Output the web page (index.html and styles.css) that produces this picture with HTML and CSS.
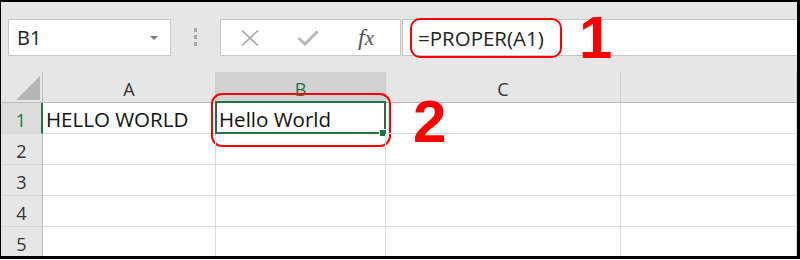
FILE: index.html
```html
<!DOCTYPE html>
<html lang="en">
<head>
    <meta charset="UTF-8">
    <meta name="viewport" content="width=device-width, initial-scale=1.0">
    <title>PROPER</title>
    <link rel="stylesheet" href="styles.css">
</head>

<body>
    <div class="frame">
        <div class="toolbar">
            <div class="name-box">
                <span class="name">B1</span>
                <span class="caret"></span>
            </div>
            <div class="grip"><i></i><i></i><i></i></div>
            <div class="fx-buttons">
                <span class="slot">
                    <svg width="18" height="16" viewBox="0 0 18 16">
                        <path d="M1 0.5 L17 15.5 M17 0.5 L1 15.5" stroke="#a9a9a9" stroke-width="1.6" fill="none"/>
                    </svg>
                </span>
                <span class="slot">
                    <svg width="22" height="16" viewBox="0 0 22 16">
                        <path d="M1.5 8 L8 14 L20.5 1.5" stroke="#b8b8b8" stroke-width="3" fill="none"/>
                    </svg>
                </span>
                <span class="slot"><span class="fx">f<span class="fx-x">x</span></span></span>
            </div>
            <div class="formula">
                <span class="formula-text">=PROPER(A1)</span>
                <span class="mark mark-1">1</span>
            </div>
        </div>

        <div class="sheet">
            <div class="corner"><span class="corner-tri"></span></div>
            <div class="col-head">A</div>
            <div class="col-head on">B</div>
            <div class="col-head">C</div>
            <div class="col-head"></div>

            <div class="row-head on">1</div>
            <div class="cell">HELLO WORLD</div>
            <div class="cell active">Hello World
                <span class="ring"></span>
                <span class="handle"></span>
                <span class="note"></span>
            </div>
            <div class="cell"><span class="mark mark-2">2</span></div>
            <div class="cell"></div>

            <div class="row-head">2</div>
            <div class="cell"></div><div class="cell"></div><div class="cell"></div><div class="cell"></div>

            <div class="row-head">3</div>
            <div class="cell"></div><div class="cell"></div><div class="cell"></div><div class="cell"></div>

            <div class="row-head">4</div>
            <div class="cell"></div><div class="cell"></div><div class="cell"></div><div class="cell"></div>

            <div class="row-head">5</div>
            <div class="cell"></div><div class="cell"></div><div class="cell"></div><div class="cell"></div>
        </div>
    </div>
</body>
</html>
```

FILE: styles.css
```css
body {
    margin: 0;
    background: #fff;
    font-family: "Open Sans", "Noto Sans", sans-serif;
}

.frame {
    width: 800px;
    height: 259px;
    box-sizing: border-box;
    border-style: solid;
    border-color: #000;
    border-width: 2px 3px 3px 1px;
    overflow: hidden;
    background: #fff;
}

/* formula bar */
.toolbar {
    height: 70px;
    box-sizing: border-box;
    padding-top: 17px;
    padding-left: 7px;
    display: flex;
    align-items: flex-start;
    background: #e6e6e6;
}
.name-box {
    width: 163px;
    height: 37px;
    box-sizing: border-box;
    border: 1px solid #c6c6c6;
    background: #fff;
    display: flex;
    align-items: center;
    justify-content: space-between;
    padding: 0 12px 0 8px;
}
.name {
    font-size: 20px;
    color: #222;
}
.caret {
    width: 0;
    height: 0;
    border-left: 4px solid transparent;
    border-right: 4px solid transparent;
    border-top: 4px solid #777;
}
.grip {
    margin-left: 23px;
    margin-top: 9px;
    display: flex;
    flex-direction: column;
    gap: 3px;
}
.grip i {
    width: 3px;
    height: 4px;
    background: #a8a8a8;
}
.fx-buttons {
    margin-left: 23px;
    width: 181px;
    height: 37px;
    box-sizing: border-box;
    border: 1px solid #c6c6c6;
    background: #fff;
    display: flex;
    align-items: center;
}
.slot {
    width: 58px;
    display: flex;
    justify-content: center;
    align-items: center;
}
.fx {
    font-family: "Liberation Serif", serif;
    font-style: italic;
    font-size: 24px;
    line-height: 1;
    color: #555;
    margin-top: -2px;
}
.fx-x {
    font-size: 21px;
}
.formula {
    position: relative;
    flex: 1;
    margin-left: 1px;
    height: 37px;
    box-sizing: border-box;
    border: 1px solid #c6c6c6;
    border-right: none;
    background: #fff;
    display: flex;
    align-items: center;
}
.formula-text {
    margin-left: 7px;
    width: 152px;
    height: 40px;
    box-sizing: border-box;
    border: 2px solid #f00;
    border-radius: 10px;
    padding-left: 6px;
    display: flex;
    align-items: center;
    font-size: 20.5px;
    color: #222;
}

/* red callout numbers */
.mark {
    position: absolute;
    font-family: "Liberation Sans", Arial, sans-serif;
    font-weight: bold;
    font-size: 60px;
    line-height: 1;
    color: #f00;
}
.mark-1 {
    left: 176px;
    top: -12px;
}
.mark-2 {
    left: 27px;
    top: -11px;
}

/* grid */
.sheet {
    height: 184px;
    display: grid;
    grid-template-columns: 42px 173px 170px 235px 1fr;
    grid-template-rows: repeat(6, 31px);
    font-size: 20.5px;
    color: #111;
}
.corner,
.col-head,
.row-head {
    background: #e6e6e6;
    box-sizing: border-box;
    border-right: 1px solid #cdcdcd;
    border-bottom: 1px solid #cdcdcd;
    color: #333;
    font-size: 18px;
    display: flex;
    align-items: center;
    justify-content: center;
}
.corner {
    position: relative;
    border-right-color: #bdbdbd;
    border-bottom-color: #bdbdbd;
}
.corner-tri {
    position: absolute;
    right: 2px;
    bottom: 2px;
    width: 0;
    height: 0;
    border-left: 24px solid transparent;
    border-bottom: 24px solid #b5b5b5;
}
.col-head {
    border-bottom-color: #b8b8b8;
    padding-top: 3px;
}
.col-head.on {
    background: #d2d2d2;
    color: #217346;
}
.row-head {
    border-right-color: #bdbdbd;
    border-bottom-color: #d4d4d4;
    padding-top: 3px;
}
.row-head.on {
    background: #dcdcdc;
    color: #217346;
    border-right: 2px solid #217346;
}
.cell {
    position: relative;
    box-sizing: border-box;
    border-right: 1px solid #dadada;
    border-bottom: 1px solid #dadada;
    padding-left: 3px;
    padding-top: 2px;
    display: flex;
    align-items: center;
    white-space: nowrap;
}
.active .ring {
    position: absolute;
    top: -2px;
    left: -1px;
    right: -1px;
    bottom: -1px;
    border: 2px solid #217346;
}
.active .handle {
    position: absolute;
    right: -2px;
    bottom: -4px;
    width: 6px;
    height: 6px;
    background: #217346;
    border: 1px solid #fff;
}
.active .note {
    position: absolute;
    left: -5px;
    top: -10px;
    width: 180px;
    height: 54px;
    box-sizing: border-box;
    border: 2px solid #f00;
    border-radius: 11px;
}
```
